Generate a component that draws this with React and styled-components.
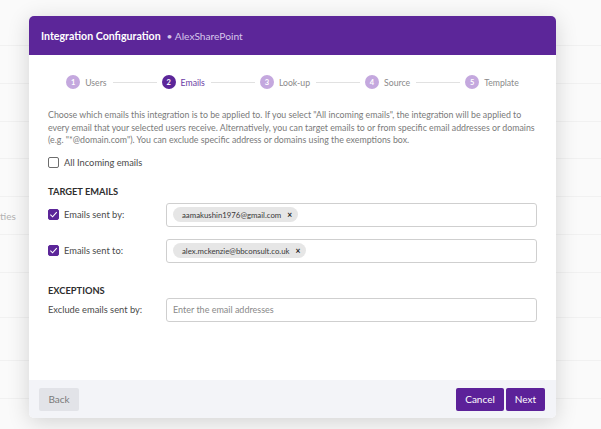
import React from 'react';
import styled, { createGlobalStyle } from 'styled-components';

const GlobalStyle = createGlobalStyle`
  html, body {
    margin: 0;
    padding: 0;
    background: #fdfdfd;
    font-family: Lato, "Open Sans", sans-serif;
  }
  * { box-sizing: border-box; }
`;

const Page = styled.div`
  position: relative;
  width: 601px;
  height: 429px;
  overflow: hidden;
  background: #fdfdfd;
`;

const BgTable = styled.div`
  display: flex;
  flex-direction: column;
  padding-top: 16px;
`;

const BgRow = styled.div`
  height: ${p => p.h}px;
  border-bottom: 1px solid #f2f2f2;
  display: flex;
  align-items: center;
  font-size: 10px;
  color: #a3a3a3;
`;

const Overlay = styled.div`
  position: absolute;
  inset: 0;
  background: rgba(240, 240, 240, 0.2);
`;

const Modal = styled.div`
  position: absolute;
  left: 29px;
  top: 16px;
  width: 527px;
  height: 402px;
  background: #fff;
  border-radius: 5px;
  box-shadow: 0 4px 22px rgba(0, 0, 0, 0.16);
  display: flex;
  flex-direction: column;
  overflow: hidden;
`;

const Header = styled.div`
  height: 39px;
  background: #5c2699;
  display: flex;
  align-items: center;
  padding-left: 12px;
  gap: 6px;
`;

const Title = styled.span`
  color: #fff;
  font-weight: 700;
  font-size: 10.6px;
`;

const SubTitle = styled.span`
  color: #d5c5ea;
  font-size: 10.2px;
`;

const Body = styled.div`
  flex: 1;
  padding: 0 19px;
  display: flex;
  flex-direction: column;
`;

const Stepper = styled.div`
  display: flex;
  align-items: center;
  justify-content: center;
  height: 54px;
`;

const Step = styled.div`
  display: flex;
  align-items: center;
  gap: 5px;
`;

const Circle = styled.span`
  width: 14px;
  height: 14px;
  border-radius: 50%;
  background: ${p => (p.active ? '#5c2699' : '#c4a8de')};
  color: #fff;
  font-size: 7.5px;
  font-weight: 700;
  display: flex;
  align-items: center;
  justify-content: center;
`;

const StepLabel = styled.span`
  font-size: 8.7px;
  color: ${p => (p.active ? '#6a3aa5' : '#8a8a8a')};
`;

const StepLine = styled.span`
  width: 44px;
  height: 1px;
  background: #e1e1e1;
  margin: 0 5px 0 6px;
`;

const Desc = styled.p`
  margin: 0;
  font-size: 8.8px;
  line-height: 12.5px;
  color: #7a7a7a;
  white-space: nowrap;
`;

const CheckRow = styled.label`
  display: flex;
  align-items: center;
  gap: 5px;
  font-size: 9.3px;
  color: #4a4a4a;
  margin-top: ${p => p.mt || 0}px;
`;

const Box = styled.span`
  width: 11px;
  height: 11px;
  border-radius: 2px;
  border: 1px solid ${p => (p.checked ? '#5c2699' : '#6d6d6d')};
  background: ${p => (p.checked ? '#5c2699' : '#fff')};
  display: flex;
  align-items: center;
  justify-content: center;
  flex-shrink: 0;
`;

const SectionTitle = styled.div`
  font-size: 9.3px;
  font-weight: 700;
  color: #2e2e2e;
  margin-top: ${p => p.mt}px;
`;

const FieldRow = styled.div`
  display: grid;
  grid-template-columns: 118px 1fr;
  align-items: center;
  margin-top: ${p => p.mt}px;
`;

const Label = styled.span`
  font-size: 9.3px;
  color: #4a4a4a;
`;

const Input = styled.div`
  height: 24px;
  border: 1px solid #cfcfcf;
  border-radius: 3px;
  display: flex;
  align-items: center;
  padding-left: 6px;
  font-size: 9px;
  color: #8a8a8a;
`;

const Chip = styled.span`
  display: inline-flex;
  align-items: center;
  gap: 6px;
  height: 15px;
  padding: 0 6px 0 9px;
  border-radius: 8px;
  background: #e6e6e6;
  color: #3a3a3a;
  font-size: 7.8px;
`;

const ChipX = styled.span`
  font-size: 8.5px;
  font-weight: 700;
  color: #222;
`;

const Footer = styled.div`
  height: 38px;
  background: #f3f4f8;
  display: flex;
  align-items: center;
  padding: 0 11px 0 10px;
  gap: 2px;
`;

const Button = styled.button`
  height: 23px;
  width: ${p => p.w}px;
  padding: 0;
  border: none;
  border-radius: 2px;
  font-family: Lato, sans-serif;
  font-size: 10px;
  background: ${p => (p.primary ? '#5c2199' : '#e2e3e8')};
  color: ${p => (p.primary ? '#fff' : '#7a7a7a')};
`;

const Spacer = styled.div`
  flex: 1;
`;

const Check = () => (
  <svg width="9" height="9" viewBox="0 0 10 10">
    <path d="M1.5 5.2 L4 7.6 L8.6 2.4" fill="none" stroke="#fff" strokeWidth="1.2" />
  </svg>
);

const steps = ['Users', 'Emails', 'Look-up', 'Source', 'Template'];
const bgRows = [30, 38, 38, 37, 38, 38, 38, 45, 43, 38, 53];

export default function App() {
  return (
    <Page>
      <GlobalStyle />
      <BgTable>
        {bgRows.map((h, i) => (
          <BgRow key={i} h={h}>{i === 5 ? 'ties' : ''}</BgRow>
        ))}
      </BgTable>
      <Overlay />
      <Modal>
        <Header>
          <Title>Integration Configuration</Title>
          <SubTitle>• AlexSharePoint</SubTitle>
        </Header>
        <Body>
          <Stepper>
            {steps.map((s, i) => (
              <React.Fragment key={s}>
                {i > 0 && <StepLine />}
                <Step>
                  <Circle active={i === 1}>{i + 1}</Circle>
                  <StepLabel active={i === 1}>{s}</StepLabel>
                </Step>
              </React.Fragment>
            ))}
          </Stepper>
          <Desc>
            Choose which emails this integration is to be applied to. If you select "All incoming emails", the integration will be applied to
            <br />
            every email that your selected users receive. Alternatively, you can target emails to or from specific email addresses or domains
            <br />
            (e.g. "*@domain.com"). You can exclude specific address or domains using the exemptions box.
          </Desc>
          <CheckRow mt={10}>
            <Box />
            All Incoming emails
          </CheckRow>
          <SectionTitle mt={18}>TARGET EMAILS</SectionTitle>
          <FieldRow mt={6}>
            <CheckRow>
              <Box checked><Check /></Box>
              Emails sent by:
            </CheckRow>
            <Input>
              <Chip>aamakushin1976@gmail.com<ChipX>×</ChipX></Chip>
            </Input>
          </FieldRow>
          <FieldRow mt={12}>
            <CheckRow>
              <Box checked><Check /></Box>
              Emails sent to:
            </CheckRow>
            <Input>
              <Chip>alex.mckenzie@bbconsult.co.uk<ChipX>×</ChipX></Chip>
            </Input>
          </FieldRow>
          <SectionTitle mt={22}>EXCEPTIONS</SectionTitle>
          <FieldRow mt={2}>
            <Label>Exclude emails sent by:</Label>
            <Input>Enter the email addresses</Input>
          </FieldRow>
        </Body>
        <Footer>
          <Button w={40}>Back</Button>
          <Spacer />
          <Button primary w={48}>Cancel</Button>
          <Button primary w={39}>Next</Button>
        </Footer>
      </Modal>
    </Page>
  );
}
